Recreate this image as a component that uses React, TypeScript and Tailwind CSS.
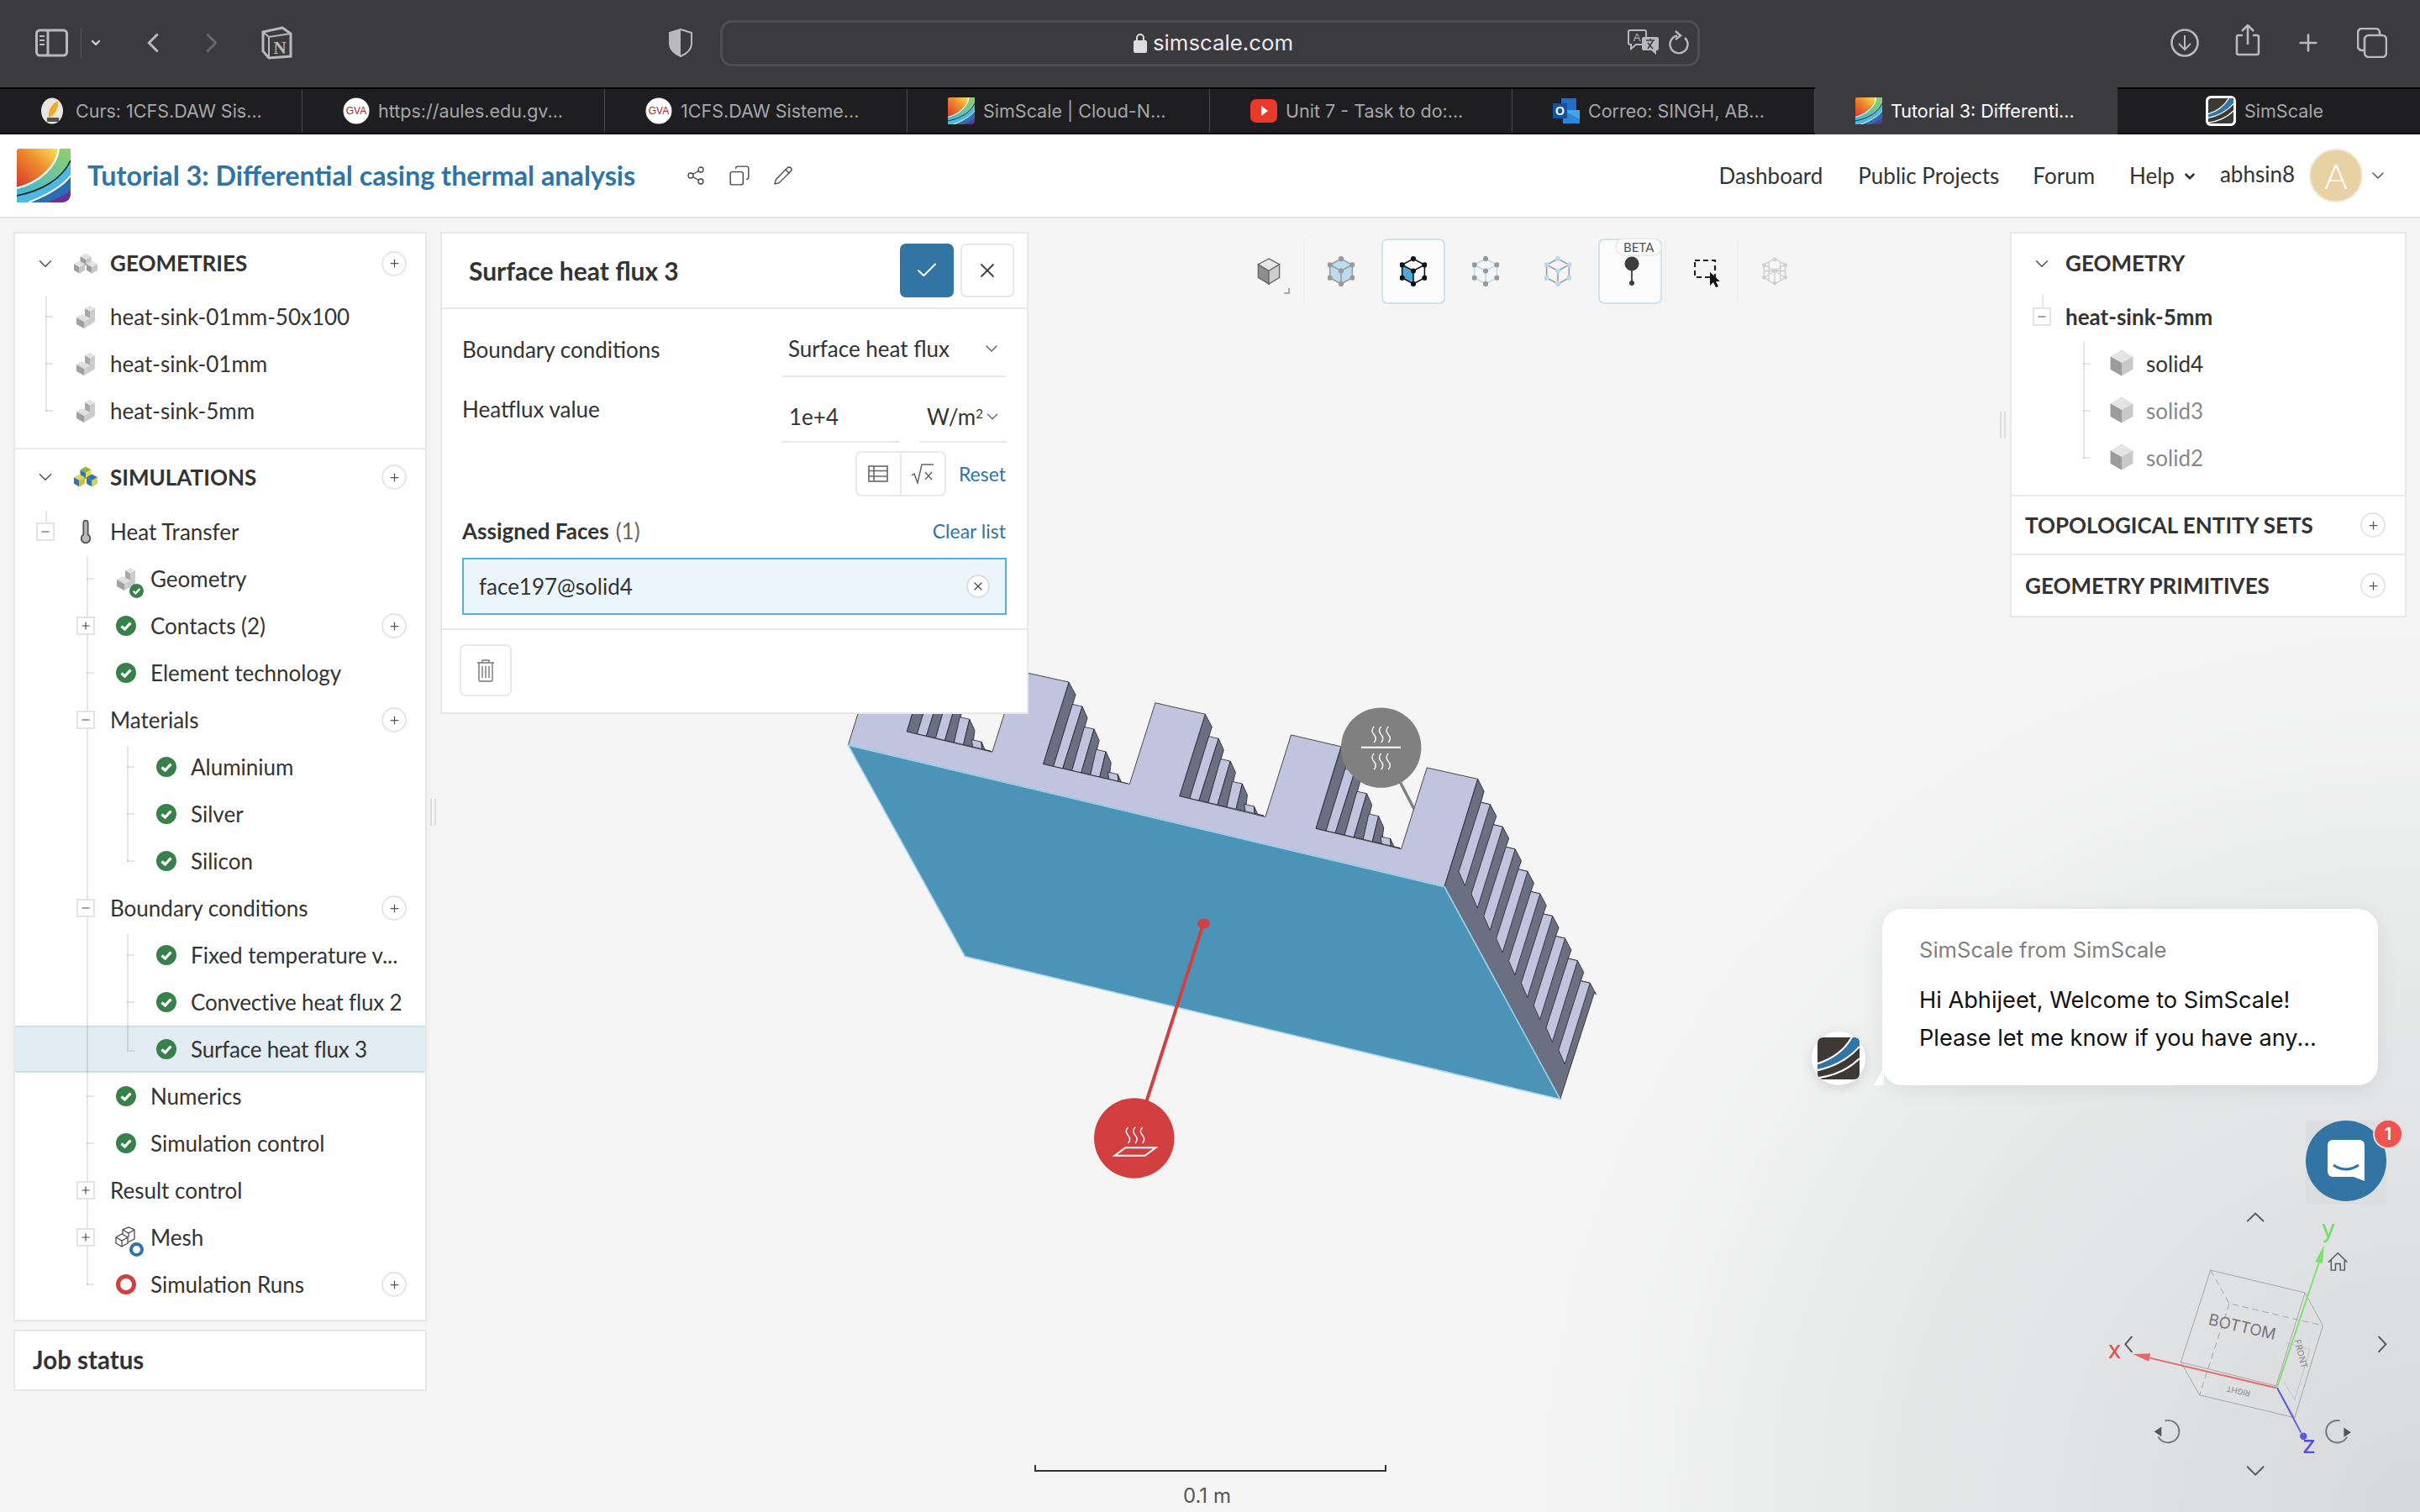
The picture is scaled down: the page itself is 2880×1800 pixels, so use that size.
import type { ReactNode } from "react";
import {
  Check,
  ChevronDown,
  ChevronLeft,
  ChevronRight,
  Copy,
  Minus,
  Pencil,
  Plus,
  Share2,
  Thermometer,
  X,
} from "lucide-react";

const TABS = [
  { label: "Curs: 1CFS.DAW Sis...", icon: "moodle" },
  { label: "https://aules.edu.gv...", icon: "gva" },
  { label: "1CFS.DAW Sisteme...", icon: "gva" },
  { label: "SimScale | Cloud-N...", icon: "rainbow" },
  { label: "Unit 7 - Task to do:...", icon: "youtube" },
  { label: "Correo: SINGH, AB...", icon: "outlook" },
  { label: "Tutorial 3: Differenti...", icon: "rainbow", active: true },
  { label: "SimScale", icon: "simscale", center: true },
];

function RainbowLogo({ size }: { size: number }) {
  return (
    <svg width={size} height={size} viewBox="0 0 64 64" className="shrink-0">
      <defs>
        <linearGradient id="warm" x1="0" y1="1" x2="1" y2="0">
          <stop offset="0" stopColor="#d8352f" />
          <stop offset="0.55" stopColor="#ee8a2c" />
          <stop offset="1" stopColor="#f7e65a" />
        </linearGradient>
        <linearGradient id="cool" x1="0" y1="1" x2="1" y2="0">
          <stop offset="0" stopColor="#3fb6d8" />
          <stop offset="1" stopColor="#93cf6a" />
        </linearGradient>
        <clipPath id="logoclip">
          <path d="M4 0H64V52Q64 64 52 64H0V4Q0 0 4 0Z" />
        </clipPath>
      </defs>
      <g clipPath="url(#logoclip)">
        <rect width="64" height="64" fill="#2c70b2" />
        <path d="M0 0H50C48 20 28 40 0 47Z" fill="url(#warm)" />
        <path d="M50 0H64V14C54 36 30 50 0 56V47C28 40 48 20 50 0Z" fill="url(#cool)" />
        <path d="M64 14V32C54 46 34 56 14 64H0V56C30 50 54 36 64 14Z" fill="#4fb7e2" />
        <path d="M64 32V64H14C34 56 54 46 64 32Z" fill="#2d6cb0" />
        <path d="M64 50V64H36C46 60 56 56 64 50Z" fill="#6a2f9b" />
        <path d="M50 0C48 20 28 40 0 47" fill="none" stroke="#fff" strokeWidth="2.2" />
        <path d="M64 14C54 36 30 50 0 56" fill="none" stroke="#14202c" strokeWidth="1.6" />
        <path d="M64 32C54 46 34 56 14 64" fill="none" stroke="#fff" strokeWidth="2" />
      </g>
    </svg>
  );
}

function SimScaleLogo({ size }: { size: number }) {
  return (
    <svg width={size} height={size} viewBox="0 0 32 32" className="shrink-0">
      <rect width="32" height="32" rx="4" fill="#3d3935" />
      <path d="M0 20C12 16 21 9 26 0H32V7C25 15 14 22 0 25Z" fill="#3174a8" />
      <path d="M0 20C12 16 21 9 26 0" fill="none" stroke="#fff" strokeWidth="1.4" />
      <path d="M0 25C14 22 25 15 32 7" fill="none" stroke="#fff" strokeWidth="1.4" />
      <path d="M0 31C14 29 25 23 32 16" fill="none" stroke="#fff" strokeWidth="1.4" />
    </svg>
  );
}

function Favicon({ kind }: { kind: string }) {
  if (kind === "rainbow") return <RainbowLogo size={32} />;
  if (kind === "simscale") {
    return (
      <span className="flex h-[36px] w-[36px] items-center justify-center rounded-[6px] bg-white">
        <SimScaleLogo size={30} />
      </span>
    );
  }
  if (kind === "gva") {
    return (
      <svg width="32" height="32" viewBox="0 0 32 32" className="shrink-0">
        <circle cx="16" cy="16" r="15.5" fill="#fff" />
        <text x="16" y="20" textAnchor="middle" fontSize="12" fontFamily="Liberation Sans, sans-serif" fill="#b5202e">
          GVA
        </text>
      </svg>
    );
  }
  if (kind === "youtube") {
    return (
      <svg width="32" height="32" viewBox="0 0 32 32" className="shrink-0">
        <rect y="2" width="32" height="28" rx="7" fill="#e8392a" />
        <path d="M13 10L21 16L13 22Z" fill="#fff" />
      </svg>
    );
  }
  if (kind === "outlook") {
    return (
      <svg width="32" height="32" viewBox="0 0 32 32" className="shrink-0">
        <rect x="10" y="1" width="18" height="14" fill="#1f6fc4" />
        <rect x="12" y="15" width="20" height="16" fill="#45a5e6" />
        <path d="M12 15L32 26V31H12Z" fill="#2f86d6" />
        <rect y="7" width="17" height="18" fill="#1352a3" />
        <text x="8.5" y="21" textAnchor="middle" fontSize="14" fontWeight="700" fontFamily="Liberation Sans, sans-serif" fill="#fff">
          O
        </text>
      </svg>
    );
  }
  return (
    <svg width="32" height="32" viewBox="0 0 32 32" className="shrink-0">
      <ellipse cx="14" cy="16" rx="13" ry="15.5" fill="#e9e6df" />
      <path d="M21 4C22 13 17 21 10 24C9 15 13 8 21 4Z" fill="#eeaa2b" />
      <rect x="8" y="24" width="14" height="5" fill="#55524e" />
    </svg>
  );
}

function BrowserChrome() {
  const c = "#b9b9bd";
  return (
    <div className="flex h-[104px] items-center bg-[#3b3a3f] pb-[2px]">
      <svg width="40" height="34" viewBox="0 0 40 34" fill="none" stroke={c} strokeWidth="3" className="ml-[42px]">
        <rect x="1.5" y="2" width="36" height="30" rx="4" />
        <path d="M15 2V32" />
        <path d="M5 9H11M5 14H11M5 19H11" strokeWidth="2" />
      </svg>
      <span className="ml-[14px] h-[36px] w-px bg-[#57565b]" />
      <ChevronDown size={16} strokeWidth={3.5} color="#d0d0d3" className="ml-[9px]" />
      <ChevronLeft size={38} strokeWidth={2} color={c} className="ml-[41px]" />
      <ChevronRight size={38} strokeWidth={2} color="#66656a" className="ml-[32px]" />
      <svg width="38" height="40" viewBox="0 0 38 40" className="ml-[39px]">
        <path d="M3 7L26 2L36 9V36L10 38L3 30Z" fill="none" stroke={c} strokeWidth="3" />
        <path d="M3 7L10 13L36 9M10 13V38" fill="none" stroke={c} strokeWidth="2" />
        <text x="23" y="33" textAnchor="middle" fontSize="21" fontWeight="700" fontFamily="Liberation Serif, serif" fill={c}>
          N
        </text>
      </svg>
      <svg width="28" height="34" viewBox="0 0 28 34" className="ml-[448px]">
        <path d="M14 1L27 5V18C27 25 21 30 14 33C7 30 1 25 1 18V5Z" fill="none" stroke={c} strokeWidth="2" />
        <path d="M14 1L1 5V18C1 25 7 30 14 33Z" fill={c} />
      </svg>
      <div className="relative ml-[33px] flex h-[55px] w-[1166px] items-center justify-center rounded-[14px] border-[3px] border-[#4f4e53] pl-[8px] font-['Inter',sans-serif] text-[25.8px] text-[#e8e8ea]">
        <svg width="16" height="24" viewBox="0 0 16 24" className="mr-[7px]">
          <rect y="9" width="16" height="15" rx="2" fill="#dddde0" />
          <path d="M4 10V6A4 4 0 0 1 12 6V10" fill="none" stroke="#dddde0" strokeWidth="2" />
        </svg>
        simscale.com
        <svg width="38" height="30" viewBox="0 0 38 30" className="absolute right-[45px] top-[8px]">
          <path d="M3 1H20A2 2 0 0 1 22 3V16A2 2 0 0 1 20 18H10L4 23V18H3A2 2 0 0 1 1 16V3A2 2 0 0 1 3 1Z" fill="none" stroke={c} strokeWidth="2" />
          <text x="11" y="14" textAnchor="middle" fontSize="13" fontFamily="Liberation Sans, sans-serif" fill={c}>
            A
          </text>
          <path d="M19 9H35A2 2 0 0 1 37 11V23A2 2 0 0 1 35 25H34V30L28 25H19A2 2 0 0 1 17 23V11A2 2 0 0 1 19 9Z" fill={c} />
          <path d="M22 13H32M27 11V13M24 23L30 14M30 23L24 16" stroke="#3b3a3f" strokeWidth="1.6" />
        </svg>
        <svg width="26" height="32" viewBox="0 0 26 32" fill="none" stroke={c} strokeWidth="2.4" className="absolute right-[9px] top-[8px]">
          <path d="M20 10A10.5 10.5 0 1 1 11 7.5" />
          <path d="M9 2L15 7.5L9 12" />
        </svg>
      </div>
      <svg width="34" height="34" viewBox="0 0 34 34" fill="none" stroke={c} strokeWidth="2.6" className="ml-[560px]">
        <circle cx="17" cy="17" r="15.5" />
        <path d="M17 8V25M10 18L17 25L24 18" strokeWidth="2" />
      </svg>
      <svg width="30" height="38" viewBox="0 0 30 38" fill="none" stroke={c} strokeWidth="2.6" className="ml-[43px] mb-[6px]">
        <path d="M9 13H4A2 2 0 0 0 2 15V34A2 2 0 0 0 4 36H26A2 2 0 0 0 28 34V15A2 2 0 0 0 26 13H21" />
        <path d="M15 24V2M8 8L15 1L22 8" />
      </svg>
      <Plus size={32} strokeWidth={2} color={c} className="ml-[41px]" />
      <svg width="36" height="36" viewBox="0 0 36 36" fill="none" stroke={c} strokeWidth="2.6" className="ml-[42px]">
        <rect x="9" y="9" width="26" height="26" rx="5" />
        <path d="M9 27H6A5 5 0 0 1 1 22V6A5 5 0 0 1 6 1H22A5 5 0 0 1 27 6V9" />
      </svg>
    </div>
  );
}

function TabBar() {
  return (
    <div className="flex h-[56px] border-t-2 border-b-2 border-black bg-[#1e1e20] font-['Inter',sans-serif] text-[21.5px] text-[#a6a6a9]">
      {TABS.map((tab) => (
        <div
          key={tab.label}
          className={
            tab.active
              ? "-mt-[2px] -mb-[2px] flex w-[360px] items-center gap-[10px] bg-[#3b3a3f] pl-[48px] text-white"
              : tab.center
                ? "flex w-[360px] items-center justify-center gap-[10px] pr-[10px]"
                : "flex w-[360px] items-center gap-[10px] border-r border-[#48484b] pl-[48px]"
          }
        >
          <Favicon kind={tab.icon} />
          <span className="whitespace-nowrap">{tab.label}</span>
        </div>
      ))}
    </div>
  );
}

function AppHeader() {
  return (
    <header className="flex h-[100px] shrink-0 items-center border-b-2 border-[#e4e4e4] bg-white pl-[20px] pr-[38px] text-[26px] text-[#333]">
      <RainbowLogo size={64} />
      <h1 className="ml-[20px] text-[32.3px] font-bold text-[#2f74a6]">
        Tutorial 3: Differential casing thermal analysis
      </h1>
      <Share2 size={24} strokeWidth={1.3} color="#444" className="ml-[60px]" />
      <Copy size={26} strokeWidth={1.3} color="#444" className="ml-[27px] -scale-x-100" />
      <Pencil size={24} strokeWidth={1.3} color="#444" className="ml-[27px]" />
      <nav className="ml-auto flex items-center">
        <a>Dashboard</a>
        <a className="ml-[42px]">Public Projects</a>
        <a className="ml-[40px]">Forum</a>
        <a className="ml-[41px]">Help</a>
        <ChevronDown size={18} strokeWidth={3.5} className="ml-[9px] mt-[2px]" />
        <span className="ml-[27px] -mt-[4px]">abhsin8</span>
        <span className="ml-[17px] flex h-[64px] w-[64px] items-center justify-center rounded-full border-2 border-[#f0e9da] bg-[#e8d2a3] text-[42px] font-light text-white">
          A
        </span>
        <ChevronDown size={24} strokeWidth={1.5} color="#555" className="ml-[6px]" />
      </nav>
    </header>
  );
}

function IsoCube({ x, y, s, top = "#e2e2e2", left = "#9d9d9d", right = "#c6c6c6" }: { x: number; y: number; s: number; top?: string; left?: string; right?: string }) {
  const w = s * 0.87;
  return (
    <g>
      <path d={`M${x} ${y - s}L${x + w} ${y - s / 2}L${x} ${y}L${x - w} ${y - s / 2}Z`} fill={top} />
      <path d={`M${x - w} ${y - s / 2}L${x} ${y}V${y + s}L${x - w} ${y + s / 2}Z`} fill={left} />
      <path d={`M${x + w} ${y - s / 2}L${x} ${y}V${y + s}L${x + w} ${y + s / 2}Z`} fill={right} />
    </g>
  );
}

function StackIcon({ colored }: { colored?: boolean }) {
  const a = colored ? { top: "#8fb53c", left: "#2f74b0", right: "#e5d850" } : {};
  const b = colored ? { top: "#e5d850", left: "#2f74b0", right: "#cfc23a" } : {};
  const d = colored ? { top: "#2f74b0", left: "#2f74b0", right: "#d8cf4e" } : {};
  return (
    <svg width="30" height="30" viewBox="0 0 30 30">
      <IsoCube x={15} y={10} s={7.5} {...a} />
      <IsoCube x={7.5} y={19} s={7.5} {...b} />
      <IsoCube x={22.5} y={19} s={7.5} {...d} />
    </svg>
  );
}

function StepIcon() {
  return (
    <svg width="23" height="29" viewBox="0 0 23 29">
      <path d="M10 4L16 0.5L22 4L16 7.5Z" fill="#e5e5e5" />
      <path d="M10 4L16 7.5V16L10 13Z" fill="#a8a8a8" />
      <path d="M16 7.5L22 4V20L9 28V20L16 16Z" fill="#cbcbcb" />
      <path d="M0 15L6.5 11L10 13L16 16L9 20Z" fill="#e0e0e0" />
      <path d="M0 15L9 20V28L0 23Z" fill="#a0a0a0" />
    </svg>
  );
}

function StatusOk({ size = 24 }: { size?: number }) {
  return (
    <svg width={size} height={size} viewBox="0 0 24 24" className="shrink-0">
      <circle cx="12" cy="12" r="12" fill="#38814d" />
      <path d="M6.5 12.5L10.5 16L17.5 8.5" fill="none" stroke="#fff" strokeWidth="3.2" />
    </svg>
  );
}

function Ring({ color, size }: { color: string; size: number }) {
  return <span className="block rounded-full bg-white" style={{ width: size, height: size, border: `${Math.round(size / 4.4)}px solid ${color}` }} />;
}

function MeshIcon() {
  return (
    <svg width="26" height="26" viewBox="0 0 26 26" fill="none" stroke="#444" strokeWidth="1.2">
      <path d="M1 13L8 9L15 13V20L8 24L1 20Z" />
      <path d="M1 13L8 17L15 13M8 17V24" />
      <path d="M9 9V4L16 1L23 4V15L15 19" />
      <path d="M9 4L16 8L23 4M16 8V13" />
    </svg>
  );
}

function PlusCircle() {
  return (
    <button className="flex h-[30px] w-[30px] items-center justify-center rounded-full border-2 border-[#e2e5eb] bg-white">
      <Plus size={15} strokeWidth={2} color="#555" />
    </button>
  );
}

function Toggle({ open, className }: { open: boolean; className: string }) {
  return (
    <span className={`absolute top-[17px] z-10 flex h-[22px] w-[22px] items-center justify-center border-2 border-[#e4e4e4] bg-white ${className}`}>
      {open ? <Minus size={14} strokeWidth={2} color="#444" /> : <Plus size={14} strokeWidth={2} color="#444" />}
    </span>
  );
}

function Row({
  pad,
  icon,
  label,
  toggle,
  stub,
  plus,
  selected,
  labelClass = "",
}: {
  pad: string;
  icon?: ReactNode;
  label: string;
  toggle?: ReactNode;
  stub?: string;
  plus?: boolean;
  selected?: boolean;
  labelClass?: string;
}) {
  return (
    <div className={`relative flex h-[56px] items-center ${pad} ${selected ? "border-y-2 border-[#cbe0ec] bg-[#e1ecf3]" : ""}`}>
      {stub && <span className={`absolute top-[27px] h-[2px] w-[9px] bg-black/10 ${stub}`} />}
      {toggle}
      {icon && <span className="relative flex h-[34px] w-[58px] items-center justify-center">{icon}</span>}
      <span className={`whitespace-nowrap ${labelClass}`}>{label}</span>
      {plus && (
        <span className="absolute right-[22px] top-[13px]">
          <PlusCircle />
        </span>
      )}
    </div>
  );
}

function SectionHead({ icon, title, className }: { icon: ReactNode; title: string; className: string }) {
  return (
    <div className={`relative flex items-center pl-[55px] ${className}`}>
      <ChevronDown size={26} strokeWidth={1.5} color="#555" className="absolute left-[23px]" />
      <span className="flex w-[58px] justify-center">{icon}</span>
      <span className="font-bold">{title}</span>
      <span className="absolute right-[22px]">
        <PlusCircle />
      </span>
    </div>
  );
}

function VLine({ className }: { className: string }) {
  return <span className={`absolute w-[2px] bg-black/10 ${className}`} />;
}

function LeftColumn() {
  const ok = <StatusOk />;
  return (
    <aside className="relative z-10 flex w-[492px] shrink-0 flex-col gap-[10px]">
      <div className="border-2 border-[#e8e8e8] bg-white shadow-[0_0_12px_rgba(0,0,0,0.03)]">
        <section className="border-b-2 border-[#e8e8e8] pb-[16px]">
          <SectionHead icon={<StackIcon />} title="GEOMETRIES" className="h-[71px]" />
          <div className="relative">
            <Row pad="pl-[55px]" icon={<StepIcon />} label="heat-sink-01mm-50x100" stub="left-[36px]" />
            <Row pad="pl-[55px]" icon={<StepIcon />} label="heat-sink-01mm" stub="left-[36px]" />
            <Row pad="pl-[55px]" icon={<StepIcon />} label="heat-sink-5mm" stub="left-[36px]" />
            <VLine className="left-[36px] top-[3px] bottom-[27px]" />
          </div>
        </section>
        <section className="pb-[14px]">
          <SectionHead icon={<StackIcon colored />} title="SIMULATIONS" className="h-[66px] mb-[4px]" />
          <div className="relative">
            <VLine className="left-[36px] top-[3px] h-[14px]" />
            <Row
              pad="pl-[55px]"
              icon={<Thermometer size={32} strokeWidth={1.4} color="#555" fill="#bbb" />}
              label="Heat Transfer"
              toggle={<Toggle open className="left-[25px]" />}
            />
          </div>
          <div className="relative">
            <Row
              pad="pl-[103px]"
              icon={
                <>
                  <StepIcon />
                  <span className="absolute right-[8px] bottom-[-6px] rounded-full">
                    <StatusOk size={17} />
                  </span>
                </>
              }
              label="Geometry"
              stub="left-[85px]"
            />
            <Row pad="pl-[103px]" icon={ok} label="Contacts (2)" toggle={<Toggle open={false} className="left-[73px]" />} plus />
            <Row pad="pl-[103px]" icon={ok} label="Element technology" stub="left-[85px]" />
            <Row pad="pl-[113px]" label="Materials" toggle={<Toggle open className="left-[73px]" />} plus />
            <div className="relative">
              <Row pad="pl-[151px]" icon={ok} label="Aluminium" stub="left-[133px]" />
              <Row pad="pl-[151px]" icon={ok} label="Silver" stub="left-[133px]" />
              <Row pad="pl-[151px]" icon={ok} label="Silicon" stub="left-[133px]" />
              <VLine className="left-[133px] top-[3px] bottom-[27px]" />
            </div>
            <Row pad="pl-[113px]" label="Boundary conditions" toggle={<Toggle open className="left-[73px]" />} plus />
            <div className="relative">
              <Row pad="pl-[151px]" icon={ok} label="Fixed temperature v..." stub="left-[133px]" />
              <Row pad="pl-[151px]" icon={ok} label="Convective heat flux 2" labelClass="tracking-[-0.2px]" stub="left-[133px]" />
              <Row pad="pl-[151px]" icon={ok} label="Surface heat flux 3" labelClass="tracking-[-0.2px]" stub="left-[133px]" selected />
              <VLine className="left-[133px] top-[3px] bottom-[27px]" />
            </div>
            <Row pad="pl-[103px]" icon={ok} label="Numerics" stub="left-[85px]" />
            <Row pad="pl-[103px]" icon={ok} label="Simulation control" stub="left-[85px]" />
            <Row pad="pl-[113px]" label="Result control" toggle={<Toggle open={false} className="left-[73px]" />} />
            <Row
              pad="pl-[103px]"
              icon={
                <>
                  <MeshIcon />
                  <span className="absolute right-[8px] bottom-[-6px]">
                    <Ring color="#2f74b0" size={17} />
                  </span>
                </>
              }
              label="Mesh"
              toggle={<Toggle open={false} className="left-[73px]" />}
            />
            <Row pad="pl-[103px]" icon={<Ring color="#d23f40" size={24} />} label="Simulation Runs" stub="left-[85px]" plus />
            <VLine className="left-[85px] top-[2px] bottom-[27px]" />
          </div>
        </section>
      </div>
      <div className="flex h-[73px] items-center border-2 border-[#e8e8e8] bg-white pl-[21px] text-[29.5px] font-bold">Job status</div>
    </aside>
  );
}

function UnderlineField({ className, children }: { className: string; children: ReactNode }) {
  return <div className={`flex items-center justify-between border-b-2 border-[#e8e8e8] ${className}`}>{children}</div>;
}

function FormPanel() {
  return (
    <section className="relative z-10 ml-[16px] h-[574px] w-[700px] shrink-0 border-2 border-[#e8e8e8] bg-white">
      <div className="flex h-[90px] items-center border-b-2 border-[#e8e8e8] pl-[32px] pr-[15px]">
        <h2 className="text-[30px] font-bold">Surface heat flux 3</h2>
        <button className="ml-auto flex h-[64px] w-[64px] items-center justify-center rounded-[7px] bg-[#3274a3]">
          <Check size={30} strokeWidth={1.6} color="#fff" />
        </button>
        <button className="ml-[8px] flex h-[64px] w-[64px] items-center justify-center rounded-[7px] border-2 border-[#e8e8e8]">
          <X size={28} strokeWidth={1.6} color="#444" />
        </button>
      </div>
      <div className="px-[24px] pt-[17px]">
        <div className="flex h-[64px] items-center">
          <span className="-mt-[2px] w-[380px]">Boundary conditions</span>
          <UnderlineField className="h-[64px] w-[268px] pl-[8px] pr-[6px]">
            <span className="-mt-[2px]">Surface heat flux</span>
            <ChevronDown size={24} strokeWidth={1.5} color="#666" className="-mt-[2px]" />
          </UnderlineField>
        </div>
        <div className="flex h-[80px]">
          <span className="mt-[19px] w-[380px]">Heatflux value</span>
          <UnderlineField className="h-[78px] w-[141px] pl-[9px]">
            <span className="mt-[18px]">1e+4</span>
          </UnderlineField>
          <UnderlineField className="ml-[24px] h-[78px] w-[103px] pl-[8px] pr-[6px]">
            <span className="mt-[18px] whitespace-nowrap">
              W/m<sup className="text-[15px]">2</sup>
            </span>
            <ChevronDown size={24} strokeWidth={1.5} color="#666" className="mt-[18px]" />
          </UnderlineField>
        </div>
        <div className="mt-[8px] flex h-[54px] items-center justify-end">
          <div className="flex h-[54px] w-[108px] rounded-[7px] border-2 border-[#e8e8e8]">
            <span className="flex flex-1 items-center justify-center border-r-2 border-[#e8e8e8]">
              <svg width="24" height="20" viewBox="0 0 24 20" fill="none" stroke="#666" strokeWidth="1.6">
                <rect x="1" y="1" width="22" height="18" />
                <path d="M1 6.5H23M1 13H23M7 1V19" />
              </svg>
            </span>
            <span className="flex flex-1 items-center justify-center">
              <svg width="28" height="24" viewBox="0 0 28 24" fill="none" stroke="#666" strokeWidth="1.5">
                <path d="M1 14L4 12L8 23L13 1H27" />
                <path d="M17 10L25 19M25 10L17 19" />
              </svg>
            </span>
          </div>
          <a className="ml-[15px] mr-[1px] text-[23px] text-[#3274a3]">Reset</a>
        </div>
        <div className="mt-[21px] flex h-[40px] items-center justify-between">
          <span>
            <b className="font-bold">Assigned Faces</b>
            <span className="ml-[8px] text-[#666]">(1)</span>
          </span>
          <a className="mr-[1px] text-[23px] text-[#3274a3]">Clear list</a>
        </div>
        <div className="mt-[12px] flex h-[68px] items-center justify-between border-2 border-[#55afe0] bg-[#ebf6fc] pl-[18px] pr-[18px]">
          face197@solid4
          <span className="flex h-[28px] w-[28px] items-center justify-center rounded-full border-2 border-[#ddd] bg-white">
            <X size={16} strokeWidth={2} color="#555" />
          </span>
        </div>
      </div>
      <div className="mt-[16px] border-t-2 border-[#e8e8e8] pl-[21px] pt-[17px]">
        <button className="flex h-[62px] w-[62px] items-center justify-center rounded-[7px] border-2 border-[#e8e8e8]">
          <svg width="22" height="28" viewBox="0 0 22 28" fill="none" stroke="#777" strokeWidth="1.4">
            <path d="M1 5H21M7 5V2H15V5M3 5V26A1 1 0 0 0 4 27H18A1 1 0 0 0 19 26V5" />
            <path d="M7 9V23M11 9V23M15 9V23" />
          </svg>
        </button>
      </div>
    </section>
  );
}

const CUBE_NODES = [[15, 3], [28, 10], [28, 25], [15, 32], [2, 25], [2, 10], [15, 17]];

function ToolCube({ edge, dot, faces, blue }: { edge: string; dot: string; faces?: string; blue?: boolean }) {
  return (
    <svg width="32" height="36" viewBox="0 0 30 35" fill="none">
      {faces && <path d="M15 3L28 10V25L15 32L2 25V10Z" fill={faces} />}
      {blue && <path d="M2 10L15 17V32L2 25Z" fill="#4fa9d8" />}
      <path d="M15 3L28 10V25L15 32L2 25V10ZM2 10L15 17L28 10M15 17V32" stroke={edge} strokeWidth="1.5" />
      {CUBE_NODES.map(([x, y]) => (
        <circle key={`${x}-${y}`} cx={x} cy={y} r="3" fill={dot} />
      ))}
    </svg>
  );
}

function ToolItem({ active, children, sep }: { active?: boolean; children: ReactNode; sep?: boolean }) {
  return (
    <div className="relative flex h-[78px] w-[86px] items-center justify-center">
      {active && <span className="absolute inset-y-0 inset-x-[5px] rounded-[7px] border-2 border-[#cfe3f0] bg-[#fbfbfb]" />}
      <span className="relative">{children}</span>
      {sep && <span className="absolute right-0 top-[2px] bottom-[2px] w-[2px] bg-[#efefef]" />}
    </div>
  );
}

function Toolbar() {
  return (
    <div className="relative z-10 ml-[243px] mt-[8px] flex h-[78px] shrink-0">
      <ToolItem sep>
        <span className="relative block">
          <svg width="30" height="34" viewBox="0 0 30 35" stroke="#666" strokeWidth="1.4">
            <path d="M15 2L28 9L15 17L2 9Z" fill="#e6e6e6" />
            <path d="M2 9L15 17V33L2 25Z" fill="#8e8e8e" />
            <path d="M28 9L15 17V33L28 25Z" fill="#cfcfcf" />
          </svg>
          <span className="absolute -right-[10px] -bottom-[10px] h-[7px] w-[7px] border-r-2 border-b-2 border-[#aaa]" />
        </span>
      </ToolItem>
      <ToolItem>
        <ToolCube edge="#9a9a9a" dot="#9a9a9a" faces="#bcdcee" />
      </ToolItem>
      <ToolItem active>
        <ToolCube edge="#111" dot="#111" blue />
      </ToolItem>
      <ToolItem>
        <ToolCube edge="#b7dcf0" dot="#999" />
      </ToolItem>
      <ToolItem>
        <ToolCube edge="#999" dot="#b7dcf0" />
      </ToolItem>
      <ToolItem active sep>
        <svg width="18" height="36" viewBox="0 0 18 36" className="ml-[4px]">
          <ellipse cx="9" cy="9" rx="8.5" ry="8.5" fill="#3d3d3d" />
          <path d="M9 16V32" stroke="#3d3d3d" strokeWidth="1.8" />
          <circle cx="9" cy="32" r="3" fill="#3d3d3d" />
        </svg>
      </ToolItem>
      <ToolItem sep>
        <svg width="36" height="40" viewBox="0 0 36 40" className="ml-[16px]">
          <rect x="1" y="7" width="24" height="20" fill="none" stroke="#222" strokeWidth="2.2" strokeDasharray="6 4" />
          <path d="M19 21V37L23 33L26 39L29 38L26 32H31Z" fill="#111" />
        </svg>
      </ToolItem>
      <ToolItem>
        <svg width="30" height="34" viewBox="0 0 30 35" fill="none" stroke="#cfcfcf" strokeWidth="1.4">
          <path d="M15 2L28 9V25L15 33L2 25V9ZM2 9L15 17L28 9M15 17V33M2 17L28 17M8 5V29M22 5V29M2 25L28 9M2 9L28 25" />
          {CUBE_NODES.map(([x, y]) => (
            <circle key={`${x}-${y}`} cx={x} cy={y} r="2.5" fill="#cfcfcf" stroke="none" />
          ))}
        </svg>
      </ToolItem>
      <span className="absolute -top-[1px] left-[455px] rounded-full border-2 border-[#ececec] bg-[#fafafa] px-[8px] text-[15px] leading-[18px] text-[#555]">BETA</span>
    </div>
  );
}

function RightPanel() {
  return (
    <aside className="relative z-10 ml-auto mr-[16px] w-[472px] shrink-0 self-start border-2 border-[#e8e8e8] bg-white">
      <div className="border-b-2 border-[#e8e8e8] pb-[16px]">
        <div className="relative flex h-[71px] items-center pl-[64px] font-bold">
          <ChevronDown size={26} strokeWidth={1.5} color="#555" className="absolute left-[23px]" />
          GEOMETRY
        </div>
        <div className="relative">
          <VLine className="left-[36px] top-[2px] h-[16px]" />
          <Row pad="pl-[64px]" label="heat-sink-5mm" labelClass="font-bold" toggle={<Toggle open className="left-[25px]" />} />
        </div>
        <div className="relative">
          <Row pad="pl-[102px]" icon={<CubeIcon />} label="solid4" stub="left-[85px]" />
          <Row pad="pl-[102px]" icon={<CubeIcon />} label="solid3" labelClass="text-[#888]" stub="left-[85px]" />
          <Row pad="pl-[102px]" icon={<CubeIcon />} label="solid2" labelClass="text-[#888]" stub="left-[85px]" />
          <VLine className="left-[85px] top-[2px] bottom-[27px]" />
        </div>
      </div>
      <div className="relative flex h-[70px] items-center border-b-2 border-[#e8e8e8] pl-[16px] font-bold">
        TOPOLOGICAL ENTITY SETS
        <span className="absolute right-[23px]">
          <PlusCircle />
        </span>
      </div>
      <div className="relative flex h-[72px] items-center pl-[16px] font-bold">
        GEOMETRY PRIMITIVES
        <span className="absolute right-[23px]">
          <PlusCircle />
        </span>
      </div>
    </aside>
  );
}

function CubeIcon() {
  return (
    <svg width="28" height="34" viewBox="0 0 28 34">
      <IsoCube x={14} y={16} s={15.5} top="#e4e4e4" left="#9b9b9b" right="#c9c9c9" />
    </svg>
  );
}

const pts = (list: number[][]) => list.map((p) => p.join(",")).join(" ");

function NotchFins({ dx, dy }: { dx: number; dy: number }) {
  const fins: ReactNode[] = [];
  const shift = (list: number[][]) => pts(list.map(([x, y]) => [x + dx, y + dy]));
  const line = { stroke: "#222", strokeWidth: 0.8, vectorEffect: "non-scaling-stroke" as const };
  fins.push(<polygon key="d0" points={shift([[477, 120], [490, 155], [447, 351.5], [427, 345]])} fill="#6b6f82" {...line} />);
  for (let k = 0; k < 4; k++) {
    fins.push(
      <polygon
        key={`s${k}`}
        points={shift([
          [484 + 23 * k, 181 + 62 * k],
          [503 + 23 * k, 187 + 62 * k],
          [465 + 36 * k, 357 + 11.8 * k],
          [447 + 36 * k, 351 + 11.8 * k],
        ])}
        fill="#c0c4de"
        {...line}
      />,
      <polygon
        key={`d${k + 1}`}
        points={shift([
          [503 + 23 * k, 187 + 62 * k],
          [513 + 23 * k, 218 + 62 * k],
          [483 + 36 * k, 363 + 11.8 * k],
          [465 + 36 * k, 357 + 11.8 * k],
        ])}
        fill="#6b6f82"
        {...line}
      />,
    );
  }
  return <g>{fins}</g>;
}

function HeatSink() {
  const line = { stroke: "#222", strokeWidth: 0.8, vectorEffect: "non-scaling-stroke" as const };
  const side: number[][] = [[1207, 682], [1272, 386], [1284, 420]];
  const strips: number[][][] = [];
  for (let k = 0; k < 9; k++) {
    const ox = 24.25 * k;
    const oy = 61.25 * k;
    side.push([1278 + ox, 450 + oy], [1296 + ox, 456 + oy], [1308 + ox, 488 + oy]);
    strips.push([
      [1278 + ox, 450 + oy],
      [1296 + ox, 456 + oy],
      [1247 + ox, 679 + oy],
      [1235 + ox, 640 + oy],
    ]);
  }
  side.push([1499, 970], [1432, 1265]);
  const waves = (xs: number[], y: number) =>
    xs.map((x) => (
      <path
        key={`${x}-${y}`}
        d={`M${x} ${y}q-7 11 0 22q7 11 0 22`}
        fill="none"
        stroke="#fff"
        strokeWidth="1.4"
        vectorEffect="non-scaling-stroke"
      />
    ));
  return (
    <svg
      className="absolute left-[980px] top-[500px] h-[680px] w-[960px] overflow-visible"
      viewBox="0 0 1568 1568"
      preserveAspectRatio="none"
    >
      <NotchFins dx={-265} dy={-89} />
      <NotchFins dx={0} dy={0} />
      <NotchFins dx={265} dy={88} />
      <NotchFins dx={530} dy={177} />
      <polygon
        points={pts([[48, 293], [113, -3], [210, 28], [162, 256], [328, 312], [378, 89], [477, 120], [427, 345], [595, 400], [645, 177], [742, 208], [692, 433], [859, 490], [909, 265], [1006, 297], [957, 522], [1123, 578], [1173, 355], [1272, 386], [1207, 682]])}
        fill="#c0c4de"
        {...line}
      />
      <polygon points={pts(side)} fill="#6b6f82" {...line} />
      {strips.map((s, i) => (
        <polygon key={i} points={pts(s)} fill="#c0c4de" {...line} />
      ))}
      <polygon
        points="48,293 1207,682 1432,1265 275,873"
        fill="#4c93b8"
        stroke="#9fd2ee"
        strokeWidth="1.6"
        vectorEffect="non-scaling-stroke"
      />
      <path d="M738 785L628 1270" stroke="#d23f40" strokeWidth="4" vectorEffect="non-scaling-stroke" />
      <ellipse cx="739" cy="783" rx="12" ry="14" fill="#d23f40" />
      <ellipse cx="604" cy="1372" rx="78" ry="110" fill="#d23f40" />
      {waves([592, 606, 620], 1342)}
      <path d="M566 1420L587 1398H646L625 1420Z" fill="none" stroke="#fff" strokeWidth="2" vectorEffect="non-scaling-stroke" />
      <path d="M1120 392L1148 468" stroke="#808080" strokeWidth="3.5" vectorEffect="non-scaling-stroke" />
      <ellipse cx="1084" cy="300" rx="78" ry="110" fill="#808080" />
      {waves([1070, 1084, 1098], 242)}
      {waves([1070, 1084, 1098], 316)}
      <path d="M1045 299H1122" stroke="#fff" strokeWidth="2" vectorEffect="non-scaling-stroke" />
    </svg>
  );
}

function Gizmo() {
  const ln = { fill: "none", stroke: "#555", strokeWidth: 4 };
  return (
    <svg className="absolute left-[2140px] top-[800px] h-[740px] w-[740px]" viewBox="0 0 1568 1568">
      <g fill="none" stroke="#a0a1a4" strokeWidth="2">
        <path d="M1040 958L1278 1015L1205 1250L965 1190Z" />
        <path d="M1278 1015L1323 1098L1252 1330L1205 1250" />
        <path d="M965 1190L1012 1273L1252 1330" />
        <path d="M1040 958L1087 1042L1323 1098M1087 1042L1012 1273" strokeDasharray="16 10" />
        <path d="M1228 1140L1290 1158L1252 1285L1225 1240" strokeWidth="1" />
      </g>
      <text x="1120" y="1115" textAnchor="middle" fontSize="40" fontFamily="Inter, sans-serif" fill="#777" transform="rotate(13 1120 1100)">
        BOTTOM
      </text>
      <text x="1110" y="1268" textAnchor="middle" fontSize="20" fontFamily="Inter, sans-serif" fill="#888" transform="rotate(193 1110 1262)">
        RIGHT
      </text>
      <text x="1265" y="1175" textAnchor="middle" fontSize="22" fontFamily="Inter, sans-serif" fill="#888" transform="rotate(75 1265 1170)">
        FRONT
      </text>
      <path d="M1208 1252L1316 930" stroke="#7be36b" strokeWidth="4" />
      <path d="M1326 895L1322 942L1304 936Z" fill="#7be36b" />
      <path d="M1205 1255L880 1178" stroke="#e46a6a" strokeWidth="4" />
      <path d="M845 1170L888 1168L884 1188Z" fill="#e46a6a" />
      <path d="M1208 1255L1268 1368" stroke="#5a5ae0" strokeWidth="4" />
      <circle cx="1274" cy="1377" r="9" fill="#5a5ae0" />
      <text x="1337" y="875" textAnchor="middle" fontSize="62" fontFamily="Inter, sans-serif" fill="#74dd64">y</text>
      <text x="798" y="1180" textAnchor="middle" fontSize="62" fontFamily="Inter, sans-serif" fill="#e05050">x</text>
      <text x="1288" y="1420" textAnchor="middle" fontSize="62" fontFamily="Inter, sans-serif" fill="#4d4de0">z</text>
      <path d="M1132 835L1153 815L1174 835" {...ln} />
      <path d="M1132 1453L1153 1474L1174 1453" {...ln} />
      <path d="M842 1125L825 1145L842 1165" {...ln} />
      <path d="M1463 1125L1482 1145L1463 1165" {...ln} />
      <path d="M1337 938L1361 915L1385 938M1344 932V958H1355V942H1367V958H1378V932" fill="none" stroke="#555" strokeWidth="3" />
      <path d="M925 1338A28 28 0 1 1 908 1378" {...ln} stroke="#777" />
      <path d="M898 1365L916 1353L916 1378Z" fill="#555" />
      <path d="M1366 1338A28 28 0 1 0 1384 1378" {...ln} stroke="#777" />
      <path d="M1394 1367L1376 1355L1376 1379Z" fill="#555" />
    </svg>
  );
}

function ChatWidget() {
  return (
    <div className="font-['Inter',sans-serif]">
      <div className="absolute left-[2156px] top-[968px] flex h-[64px] w-[64px] items-center justify-center rounded-full bg-white shadow-[0_4px_14px_rgba(0,0,0,0.12)]">
        <span className="overflow-hidden rounded-[6px]">
          <SimScaleLogo size={50} />
        </span>
      </div>
      <div className="absolute left-[2230px] top-[1010px] h-[22px] w-[12px] bg-white [clip-path:polygon(100%_0,100%_100%,0_100%)]" />
      <div className="absolute left-[2240px] top-[822px] h-[210px] w-[590px] rounded-[24px] bg-white pl-[44px] pt-[33px] shadow-[0_4px_24px_rgba(0,0,0,0.08)]">
        <p className="text-[25.6px] leading-[32px] text-[#808080]">SimScale from SimScale</p>
        <p className="mt-[21px] text-[27.2px] leading-[45px] text-[#111]">
          Hi Abhijeet, Welcome to SimScale!
          <br />
          Please let me know if you have any...
        </p>
      </div>
      <div className="absolute left-[2744px] top-[1074px] h-[100px] w-[96px] bg-[#dcdddf]" />
      <button className="absolute left-[2744px] top-[1074px] flex h-[96px] w-[96px] items-center justify-center rounded-full bg-[#3274a3]">
        <svg width="44" height="50" viewBox="0 0 44 50">
          <path d="M6 0H38A6 6 0 0 1 44 6V49L31 44H6A6 6 0 0 1 0 38V6A6 6 0 0 1 6 0Z" fill="#fff" />
          <path d="M7 30Q22 40 37 30" fill="none" stroke="#3274a3" strokeWidth="3" />
        </svg>
      </button>
      <span className="absolute left-[2826px] top-[1074px] flex h-[32px] w-[32px] items-center justify-center rounded-full bg-[#ee5350] text-[20px] font-semibold text-white ring-2 ring-[#dcdddf]">
        1
      </span>
    </div>
  );
}

export default function App() {
  return (
    <div className="flex h-[1800px] w-[2880px] flex-col overflow-hidden bg-[#f5f5f5] font-['Lato',sans-serif] text-[26px] text-[#333]">
      <BrowserChrome />
      <TabBar />
      <AppHeader />
      <main className="relative flex flex-1 items-start bg-[radial-gradient(circle_at_100%_100%,#d8d9dc_0px,#e3e5e6_500px,#eaeceb_740px,#f5f5f5_1050px)] pl-[16px] pt-[16px]">
        <HeatSink />
        <LeftColumn />
        <FormPanel />
        <Toolbar />
        <RightPanel />
        <span className="absolute left-[512px] top-[691px] h-[32px] w-[7px] border-x-2 border-[#ddd]" />
        <span className="absolute left-[2380px] top-[230px] h-[32px] w-[7px] border-x-2 border-[#ddd]" />
        <div className="absolute left-[1231px] top-[1484px] h-[8px] w-[419px] border-x-2 border-b-2 border-[#333]" />
        <span className="absolute left-[1408px] top-[1503px] font-['Inter',sans-serif] text-[24px] text-[#555]">0.1 m</span>
        <Gizmo />
        <ChatWidget />
      </main>
    </div>
  );
}
